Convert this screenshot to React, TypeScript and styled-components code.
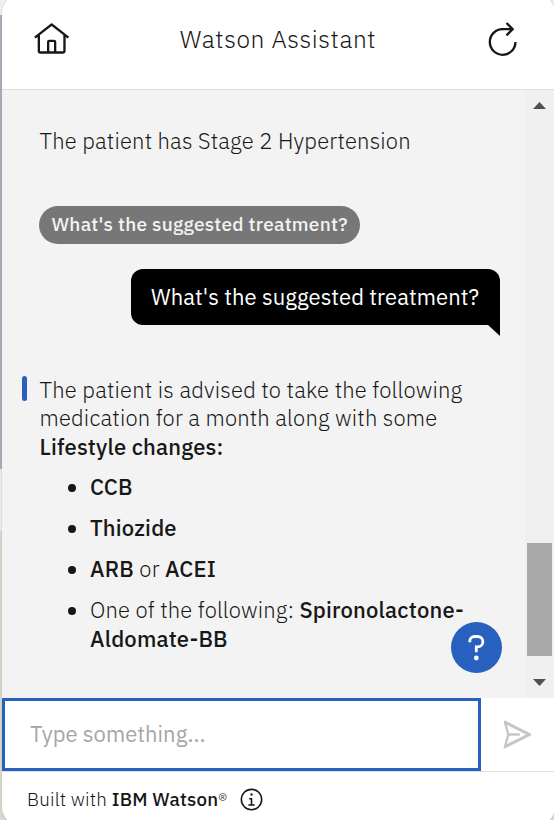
import React from "react";
import styled, { createGlobalStyle } from "styled-components";

const BLUE = "#2860c0";
const FONT = `"IBM Plex Sans", Roboto, "Liberation Sans", sans-serif`;

const GlobalStyle = createGlobalStyle`
  * { box-sizing: border-box; }
  html, body { margin: 0; height: 820px; overflow: hidden; }
  body { font-family: ${FONT}; color: #171717; }
`;

const Backdrop = styled.div`
  height: 820px;
  overflow: hidden;
  padding-left: 2px;
  background: linear-gradient(#f0f0f1 15px, #abafba 15px 469px, #ebebeb 469px 531px, #d8d9cd 531px);
`;

const Widget = styled.main`
  display: flex;
  flex-direction: column;
  width: 553px;
  height: 832px;
  margin-top: -6px;
  border-radius: 19px;
  overflow: hidden;
  background: #fff;
  box-shadow: 0 0 2px rgba(0, 0, 0, 0.2);
`;

const Header = styled.header`
  display: flex;
  align-items: flex-start;
  justify-content: space-between;
  height: 96px;
  padding: 26.5px 33.5px 0 31.4px;
  border-bottom: 1px solid #dfdfdf;
`;

const Title = styled.h1`
  margin: 3.5px 0 0 1px;
  font-size: 24.5px;
  font-weight: 300;
  line-height: 30px;
  letter-spacing: 0.62px;
  white-space: nowrap;
`;

const Icon = styled.svg<{ $size: number }>`
  display: block;
  flex: none;
  width: ${(p) => p.$size}px;
  height: ${(p) => p.$size}px;
  fill: currentColor;
`;

const Body = styled.section`
  position: relative;
  display: flex;
  height: 608px;
  background: #f3f3f3;
`;

const Messages = styled.div`
  display: flex;
  flex-direction: column;
  align-items: flex-start;
  width: 523px;
  padding: 37px 25px 0 37.5px;
`;

const Text = styled.p`
  margin: 0;
  font-size: 22px;
  font-weight: 300;
  line-height: 28.5px;
`;

const Run = styled.span<{ $track: number }>`
  letter-spacing: ${(p) => p.$track}px;
  white-space: nowrap;
`;

const Strong = styled(Run).attrs({ as: "strong" })`
  font-weight: 500;
`;

const Chip = styled.button`
  height: 38px;
  margin: 50.5px 0 0 -0.5px;
  padding: 0 0 1px 12.5px;
  width: 321px;
  border: 0;
  border-radius: 19px;
  background: #777;
  color: #f3f3f3;
  font: 500 19px/37px ${FONT};
  text-align: left;
`;

const Bubble = styled.div`
  position: relative;
  align-self: flex-end;
  width: 369px;
  height: 56px;
  margin-top: 25px;
  padding-left: 20px;
  border-radius: 12px 12px 0 12px;
  background: #000;
  color: #fff;
  font-size: 22px;
  font-weight: 400;
  line-height: 56px;

  &::after {
    content: "";
    position: absolute;
    right: 0;
    top: 100%;
    width: 12px;
    height: 11px;
    background: #000;
    clip-path: polygon(0 0, 100% 0, 100% 100%);
  }
`;

const Answer = styled.article`
  position: relative;
  margin-top: 50.8px;

  &::before {
    content: "";
    position: absolute;
    left: -17.5px;
    top: 0.2px;
    width: 5px;
    height: 25px;
    border-radius: 2.5px;
    background: ${BLUE};
  }
`;

const List = styled.ul`
  display: flex;
  flex-direction: column;
  gap: 12.3px;
  margin: 11.7px 0 0;
  padding: 0;
  list-style: none;
`;

const Item = styled.li`
  display: flex;
  font-size: 22px;
  font-weight: 300;
  line-height: 28.8px;

  &::before {
    content: "";
    flex: none;
    width: 8px;
    height: 8px;
    margin: 11px 14px 0 28.5px;
    border-radius: 50%;
    background: #171717;
  }
`;

const Scrollbar = styled.div`
  display: flex;
  flex-direction: column;
  align-items: center;
  width: 29px;
  padding: 12px 0 12px;
  background: #f0f0f0;
`;

const Arrow = styled.i<{ $down?: boolean }>`
  width: 13px;
  height: 7px;
  background: #505050;
  clip-path: ${(p) => (p.$down ? "polygon(0 0, 100% 0, 50% 100%)" : "polygon(50% 0, 100% 100%, 0 100%)")};
`;

const Thumb = styled.div`
  width: 25px;
  height: 113px;
  margin: 434px 0 23px;
  background: #a8a8a8;
`;

const Help = styled.button`
  position: absolute;
  left: 449px;
  top: 532px;
  width: 51px;
  height: 51px;
  padding: 0;
  border: 0;
  border-radius: 50%;
  background: ${BLUE};
  color: #fff;
`;

const Composer = styled.form`
  display: flex;
  align-items: flex-start;
  height: 74px;
  border-bottom: 1px solid #dfdfdf;
`;

const Input = styled.input`
  width: 479px;
  height: 73px;
  padding: 0 0 3px 25px;
  border: 3px solid ${BLUE};
  outline: 0;
  background: #fff;
  font: 400 22px ${FONT};
  letter-spacing: 0.03px;

  &::placeholder { color: #a6a6a6; }
`;

const Send = styled.button`
  margin: 17.5px 0 0 18px;
  padding: 0;
  border: 0;
  background: none;
  color: #c6c6c6;
`;

const Footer = styled.footer`
  display: flex;
  align-items: flex-start;
  padding: 15px 0 0 25px;
  font-size: 18.75px;
  font-weight: 300;
  line-height: 25px;
`;

const Credit = styled.span`
  width: 212px;
  white-space: nowrap;
`;

export default function App() {
  return (
    <>
      <GlobalStyle />
      <Backdrop>
        <Widget>
          <Header>
            <Icon $size={37.3} viewBox="0 0 32 32">
              <path d="M16.6123,2.2138a1.01,1.01,0,0,0-1.2427,0L1,13.4194l1.2427,1.5717L4,13.6208V26a2.0041,2.0041,0,0,0,2,2H26a2.0037,2.0037,0,0,0,2-2V13.63L29.7573,15,31,13.4282ZM18,26H14V18h4Zm2,0V18a2.0023,2.0023,0,0,0-2-2H14a2.002,2.002,0,0,0-2,2v8H6V12.0615l10-7.79,10,7.8005V26Z" />
            </Icon>
            <Title>Watson Assistant</Title>
            <Icon $size={37.3} viewBox="0 0 32 32">
              <path d="M26,18A10,10,0,1,1,16,8h6.1822l-3.5844,3.5854L20,13l6-6L20,1,18.5977,2.414,22.1851,6H16A12,12,0,1,0,28,18Z" />
            </Icon>
          </Header>
          <Body>
            <Messages>
              <Text><Run $track={0.18}>The patient has Stage 2 Hypertension</Run></Text>
              <Chip type="button"><Run $track={0.27}>What's the suggested treatment?</Run></Chip>
              <Bubble><Run $track={0.06}>What's the suggested treatment?</Run></Bubble>
              <Answer>
                <Text>
                  <Run $track={0.2}>The patient is advised to take the following</Run><br />
                  <Run $track={0.18}>medication for a month along with some</Run><br />
                  <Strong $track={0.18}>Lifestyle changes:</Strong>
                </Text>
                <List>
                  <Item><Strong $track={0.18}>CCB</Strong></Item>
                  <Item><Strong $track={0.18}>Thiozide</Strong></Item>
                  <Item>
                    <span>
                      <Strong $track={0.18}>ARB</Strong>
                      <Run $track={0.18}> or </Run>
                      <Strong $track={0.18}>ACEI</Strong>
                    </span>
                  </Item>
                  <Item>
                    <span>
                      <Run $track={0.18}>One of the following: </Run>
                      <Strong $track={0.2}>Spironolactone-</Strong><br />
                      <Strong $track={0.18}>Aldomate-BB</Strong>
                    </span>
                  </Item>
                </List>
              </Answer>
            </Messages>
            <Scrollbar>
              <Arrow />
              <Thumb />
              <Arrow $down />
            </Scrollbar>
            <Help type="button" aria-label="Help">
              <Icon $size={51} viewBox="0 0 51 51">
                <path d="M18.8 20.2v-1.3a4.7 4.7 0 0 1 4.7-4.4h3.2a5.2 5.2 0 0 1 0 10.4h-1.4v5.3" fill="none" stroke="currentColor" strokeWidth="2.8" />
                <circle cx="25.3" cy="36" r="2.4" />
              </Icon>
            </Help>
          </Body>
          <Composer>
            <Input placeholder="Type something..." />
            <Send type="button" aria-label="Send">
              <Icon $size={37} viewBox="0 0 32 32">
                <path d="M27.45,15.11l-22-11a1,1,0,0,0-1.08.12,1,1,0,0,0-.33,1L7,16,4,26.74A1,1,0,0,0,5,28a1,1,0,0,0,.45-.11l22-11a1,1,0,0,0,0-1.78ZM6.82,24.36,8.81,17H18V15H8.81L6.82,7.64,23.54,16Z" />
              </Icon>
            </Send>
          </Composer>
          <Footer>
            <Credit>
              <Run $track={0.2}>Built with </Run>
              <Strong $track={0.2}>IBM Watson</Strong>
              <Run $track={0}>®</Run>
            </Credit>
            <Icon $size={25} viewBox="0 0 32 32">
              <path d="M17 22V14H13V16H15V22H12V24H20V22ZM16 8a1.5 1.5 0 1 0 1.5 1.5A1.5 1.5 0 0 0 16 8Z" />
              <path d="M16 30A14 14 0 1 1 30 16 14 14 0 0 1 16 30ZM16 4A12 12 0 1 0 28 16 12 12 0 0 0 16 4Z" />
            </Icon>
          </Footer>
        </Widget>
      </Backdrop>
    </>
  );
}
